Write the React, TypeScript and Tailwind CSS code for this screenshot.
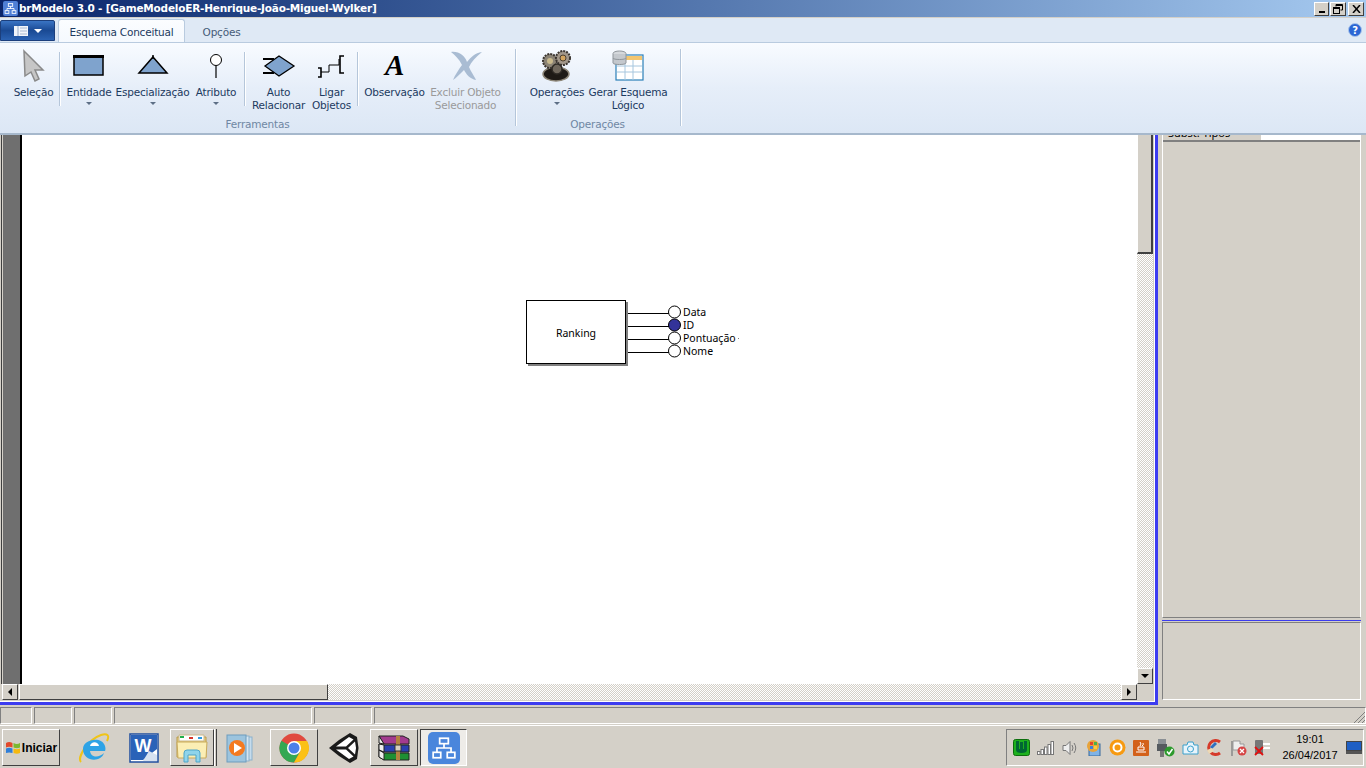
import React from "react";

const raised =
  "bg-[#d4d0c8] border border-t-white border-l-white border-r-[#404040] border-b-[#404040]";
const sunken =
  "border border-t-[#808080] border-l-[#808080] border-r-white border-b-white";
const checker =
  "bg-[repeating-conic-gradient(#d4d0c8_0_25%,#ffffff_0_50%)] bg-[length:2px_2px]";

function HierarchyGlyph({ size, stroke }: { size: number; stroke: string }) {
  return (
    <svg width={size} height={size} viewBox="0 0 24 24" fill="none" stroke={stroke} strokeWidth="1.6">
      <rect x="8" y="3" width="8" height="5" />
      <rect x="2" y="16" width="7" height="5" />
      <rect x="15" y="16" width="7" height="5" />
      <path d="M12 8v4M5.5 16v-4h13v4" />
    </svg>
  );
}

function CursorIcon() {
  return (
    <svg width="24" height="34" viewBox="0 0 24 34">
      <path d="M2 2 L21 21 L13 21 L17 30 L13 32 L9 23 L3 27 Z" fill="#c6c6c6" stroke="#8a8a8a" strokeWidth="1.5" />
    </svg>
  );
}

function EntityIcon() {
  return (
    <svg width="32" height="22" viewBox="0 0 32 22">
      <rect x="1" y="1" width="29" height="19" fill="#7fa3cd" stroke="#000" strokeWidth="1.5" />
      <rect x="0" y="0" width="31" height="3" fill="#000" />
    </svg>
  );
}

function SpecIcon() {
  return (
    <svg width="32" height="22" viewBox="0 0 32 22">
      <path d="M16 2 L30 18 H2 Z" fill="#7fa3cd" stroke="#000" strokeWidth="1.5" />
      <path d="M16 0v4" stroke="#000" strokeWidth="1.5" />
    </svg>
  );
}

function AttrIcon() {
  return (
    <svg width="16" height="26" viewBox="0 0 16 26">
      <circle cx="8" cy="7" r="5.5" fill="#fff" stroke="#000" />
      <path d="M8 13v12" stroke="#000" strokeWidth="1.2" />
    </svg>
  );
}

function AutoRelIcon() {
  return (
    <svg width="34" height="24" viewBox="0 0 34 24">
      <path d="M1 5H12M1 19H12" stroke="#000" strokeWidth="2" />
      <path d="M17 2 L32 12 L17 22 L3 12 Z" fill="#7fa3cd" stroke="#000" strokeWidth="1.3" />
    </svg>
  );
}

function LinkIcon() {
  return (
    <svg width="30" height="24" viewBox="0 0 30 24" fill="none" stroke="#000">
      <path d="M1 14H4V23H1" strokeWidth="1.6" />
      <path d="M4 18H12V11H22V5" strokeWidth="1" />
      <path d="M27 2H23V19H27" strokeWidth="1.6" />
    </svg>
  );
}

function NoteIcon() {
  return (
    <span className="-mt-[2px] font-['Liberation_Serif',serif] text-[29px] leading-[30px] font-bold italic text-black">
      A
    </span>
  );
}

function DeleteIcon() {
  return (
    <svg width="34" height="32" viewBox="0 0 34 32">
      <path d="M2 2 C10 1 16 6 18 12 C22 7 26 3 33 2 C27 7 22 12 20 17 C22 22 26 27 27 30 C21 29 17 24 15 20 C11 24 7 28 4 30 C6 25 10 19 13 15 C10 9 6 5 2 2 Z" fill="#a9bcd3" />
    </svg>
  );
}

function GearsIcon() {
  return (
    <svg width="32" height="32" viewBox="0 0 32 32">
      <ellipse cx="15" cy="24" rx="13" ry="7" fill="#1e1a16" stroke="#8d8678" strokeWidth="1.5" />
      <circle cx="9" cy="11" r="7" fill="#8b8375" stroke="#3b3530" strokeWidth="2" strokeDasharray="2 1" />
      <circle cx="9" cy="11" r="3" fill="#c9b98c" />
      <circle cx="22" cy="8" r="7" fill="#a2978a" stroke="#3b3530" strokeWidth="2" strokeDasharray="2 1" />
      <circle cx="22" cy="8" r="3" fill="#d3a45e" stroke="#4b3f30" />
      <circle cx="16" cy="19" r="5" fill="#6f675c" stroke="#2e2a25" strokeWidth="1.5" />
    </svg>
  );
}

function LogicalIcon() {
  return (
    <svg width="32" height="31" viewBox="0 0 32 31">
      <rect x="4" y="5" width="27" height="25" fill="#fff" stroke="#2a7fb8" strokeWidth="1.2" />
      <rect x="5" y="6" width="25" height="4" fill="#f3c56f" />
      <path d="M5 16H30M5 22H30M13 10V30M21 10V30" stroke="#a6c6de" />
      <ellipse cx="7.5" cy="3.5" rx="6.5" ry="2.5" fill="#d5d8dc" stroke="#8f959b" />
      <path d="M1 4V13C1 15 14 15 14 13V4" fill="#c4c8cd" stroke="#8f959b" />
      <path d="M1 8C1 10 14 10 14 8" fill="none" stroke="#8f959b" />
    </svg>
  );
}

function DownTick() {
  return <span className="mt-[3px] h-0 w-0 border-x-[3px] border-t-[3px] border-x-transparent border-t-[#5d6f86]" />;
}

type ToolProps = {
  width: string;
  icon: React.ReactNode;
  lines: string[];
  arrow?: boolean;
  disabled?: boolean;
};

function Tool({ width, icon, lines, arrow, disabled }: ToolProps) {
  return (
    <div className={`${width} flex shrink-0 flex-col items-center`}>
      <div className="mb-[4px] flex h-[33px] w-full items-center justify-center">{icon}</div>
      <div className={`text-center leading-[13px] whitespace-nowrap ${disabled ? "text-[#9a9a9a]" : "text-[#1c3a60]"}`}>
        {lines.map((l) => (
          <div key={l}>{l}</div>
        ))}
      </div>
      {arrow && <DownTick />}
    </div>
  );
}

function Sep({ group }: { group?: boolean }) {
  return (
    <div className={`${group ? "h-[77px]" : "mt-[3px] h-[54px]"} w-[2px] shrink-0 border-r border-white bg-[#b5c6da]`} />
  );
}

function Ribbon() {
  return (
    <div className="flex h-[93px] shrink-0 border-t border-b-2 border-t-[#b9cbdf] border-b-[#a6b8cc] bg-gradient-to-b from-[#f8fbff] via-[#e6eef9] via-50% to-[#dce7f5] pt-[6px] pl-[8px] font-['DejaVu_Sans',sans-serif] text-[10.5px] tracking-[-0.2px]">
      <div className="flex w-[507px] shrink-0 flex-col">
        <div className="flex h-[66px] items-start">
          <Tool width="w-[51px]" icon={<CursorIcon />} lines={["Seleção"]} />
          <Sep />
          <Tool width="w-[56px]" icon={<EntityIcon />} lines={["Entidade"]} arrow />
          <Tool width="w-[71px]" icon={<SpecIcon />} lines={["Especialização"]} arrow />
          <Tool width="w-[56px]" icon={<AttrIcon />} lines={["Atributo"]} arrow />
          <Sep />
          <Tool width="w-[65px]" icon={<AutoRelIcon />} lines={["Auto", "Relacionar"]} />
          <Tool width="w-[41px]" icon={<LinkIcon />} lines={["Ligar", "Objetos"]} />
          <div className="w-[5px] shrink-0" />
          <Sep />
          <Tool width="w-[71px]" icon={<NoteIcon />} lines={["Observação"]} />
          <Tool width="w-[71px]" icon={<DeleteIcon />} lines={["Excluir Objeto", "Selecionado"]} disabled />
        </div>
        <div className="mt-[3px] pr-[8px] text-center text-[#6f87a3]">Ferramentas</div>
      </div>
      <Sep group />
      <div className="flex w-[163px] shrink-0 flex-col">
        <div className="flex h-[66px] items-start pl-[8px]">
          <Tool width="w-[64px]" icon={<GearsIcon />} lines={["Operações"]} arrow />
          <Tool width="w-[78px]" icon={<LogicalIcon />} lines={["Gerar Esquema", "Lógico"]} />
        </div>
        <div className="mt-[3px] pr-[2px] text-center text-[#6f87a3]">Operações</div>
      </div>
      <Sep group />
    </div>
  );
}

function TitleBar() {
  return (
    <div className="flex h-[18px] shrink-0 items-center border-b border-b-[#d4d0c8] bg-gradient-to-r from-[#0a246a] to-[#a6caf0] pl-[3px] font-['DejaVu_Sans',sans-serif] text-[10.5px] font-bold tracking-[-0.2px] text-white">
      <div className="flex h-[15px] w-[15px] items-center justify-center rounded-[2px] bg-[#4f7fd6]">
        <HierarchyGlyph size={13} stroke="#ffffff" />
      </div>
      <span className="ml-[1px] flex-1 whitespace-nowrap">brModelo 3.0 - [GameModeloER-Henrique-João-Miguel-Wylker]</span>
      <div className="flex items-center text-black">
        <div className={`${raised} flex h-[14px] w-[15px] items-end justify-center pb-[2px]`}>
          <div className="h-[2px] w-[6px] bg-black" />
        </div>
        <div className={`${raised} ml-[1px] flex h-[14px] w-[16px] items-center justify-center`}>
          <svg width="10" height="10" viewBox="0 0 10 10" fill="none" stroke="#000">
            <path d="M3 2.5V.5H9.5V6H7.5" />
            <path d="M3 1.5H9.5" />
            <rect x=".5" y="3.5" width="6" height="6" />
            <path d="M.5 4.5H6.5" />
          </svg>
        </div>
        <div className={`${raised} mr-[2px] ml-[2px] flex h-[14px] w-[16px] items-center justify-center`}>
          <svg width="9" height="8" viewBox="0 0 9 8" stroke="#000" strokeWidth="1.5">
            <path d="M1 0L8 8M8 0L1 8" />
          </svg>
        </div>
      </div>
    </div>
  );
}

function TabRow() {
  return (
    <div className="flex h-[24px] shrink-0 items-end bg-[#dfe9f5] font-['DejaVu_Sans',sans-serif] text-[10.5px] tracking-[-0.2px]">
      <div className="mb-[1px] flex h-[21px] w-[55px] items-center justify-center gap-[6px] rounded-t-[2px] border border-[#1c3f7c] bg-gradient-to-b from-[#3a74c4] via-[#1a4a94] to-[#2b62b2]">
        <svg width="14" height="10" viewBox="0 0 14 10">
          <rect width="14" height="10" fill="#f2f5fa" />
          <path d="M4 0V10" stroke="#c3cfe0" strokeWidth="2" />
          <path d="M6 2H13M6 5H13M6 8H13" stroke="#a9bad2" />
        </svg>
        <span className="h-0 w-0 border-x-[4px] border-t-[4px] border-x-transparent border-t-white" />
      </div>
      <div className="ml-[3px] flex h-[23px] w-[127px] items-center justify-center rounded-t-[3px] border border-b-0 border-[#b9cbdf] bg-gradient-to-b from-[#fbfdff] to-[#f5f9fe] pt-[3px] text-[#1c3a60]">
        Esquema Conceitual
      </div>
      <div className="flex h-[22px] w-[73px] items-center justify-center pt-[3px] text-[#465b78]">Opções</div>
      <div className="flex-1" />
      <svg className="mr-[4px] mb-[5px]" width="14" height="14" viewBox="0 0 14 14">
        <circle cx="7" cy="7" r="6.5" fill="#2b66d4" stroke="#a9c4ea" />
        <text x="7" y="11" textAnchor="middle" fontSize="10" fontWeight="bold" fill="#fff" fontFamily="DejaVu Sans">
          ?
        </text>
      </svg>
    </div>
  );
}

function ScrollBtn({ dir }: { dir: "left" | "right" | "down" }) {
  const arrow = {
    left: "border-y-[4px] border-r-[4px] border-y-transparent border-r-black",
    right: "border-y-[4px] border-l-[4px] border-y-transparent border-l-black",
    down: "border-x-[4px] border-t-[4px] border-x-transparent border-t-black",
  }[dir];
  return (
    <div className={`${raised} flex h-[16px] w-[16px] shrink-0 items-center justify-center`}>
      <span className={`h-0 w-0 ${arrow}`} />
    </div>
  );
}

function Diagram() {
  const attrs = [
    { name: "Data", y: 312, key: false },
    { name: "ID", y: 325, key: true },
    { name: "Pontuação", y: 338, key: false },
    { name: "Nome", y: 351, key: false },
  ];
  return (
    <div className="relative flex-1 bg-white font-['Noto_Sans',sans-serif] text-[10.5px] text-black">
      {/* coordinates below are relative to the canvas at x=22, y=135 */}
      <div className="absolute top-[165px] left-[504px] flex h-[64px] w-[100px] items-center justify-center border border-black bg-white pt-[3px] shadow-[2px_2px_0_#808080]">
        Ranking
      </div>
      <svg className="absolute top-[169px] left-[604px]" width="60" height="60" viewBox="0 0 60 60" fill="none" stroke="#000">
        {attrs.map((a) => (
          <g key={a.name}>
            <path d={`M2 ${a.y - 304 + 1.5}H43`} />
            <circle cx="48.5" cy={a.y - 304} r="6" fill={a.key ? "#333399" : "#fff"} />
          </g>
        ))}
      </svg>
      {attrs.map((a) => (
        <span key={a.name} className="absolute left-[661px] leading-[13px]" style={{ top: a.y - 135 - 6 }}>
          {a.name}
        </span>
      ))}
      <div className="absolute top-[203px] left-[716px] h-px w-px bg-[#808080]" />
    </div>
  );
}

function Workspace() {
  return (
    <div className="h-[570px] w-[1158px] shrink-0 border-r-[3px] border-b-[3px] border-r-[#3c3cf0] border-b-[#3c3cf0]">
      <div className="flex h-full flex-col border-r border-b border-r-white border-b-white pr-[1px]">
        <div className="flex h-[549px] shrink-0">
          <div className="w-[22px] shrink-0 border-r-[2px] border-r-black bg-[linear-gradient(to_right,#d4d0c8_1px,#404040_1px,#404040_2px,#d4d0c8_2px,#d4d0c8_3px,#6f6f6f_3px)]" />
          <Diagram />
          <div className={`${checker} flex w-[16px] shrink-0 flex-col`}>
            <div className="h-[119px] shrink-0 border-r-2 border-b-2 border-l border-r-[#404040] border-b-[#404040] border-l-white bg-[#d4d0c8]" />
            <div className="flex-1" />
            <ScrollBtn dir="down" />
          </div>
        </div>
        <div className="flex h-[16px] shrink-0 pl-[2px]">
          <ScrollBtn dir="left" />
          <div className={`${raised} ml-[1px] h-[16px] w-[309px] shrink-0`} />
          <div className={`${checker} flex-1`} />
          <ScrollBtn dir="right" />
          <div className="w-[16px] shrink-0" />
        </div>
      </div>
    </div>
  );
}

function SidePanel() {
  return (
    <div className="flex flex-1 flex-col pr-[5px] pl-[4px]">
      <div className="flex h-[483px] shrink-0 flex-col border border-t-0 border-r-white border-b-[#808080] border-l-white">
        <div className="flex h-[7px] shrink-0 overflow-hidden border-b-2 border-[#808080]">
          <div className="w-[98px] shrink-0 pl-[5px] font-['Noto_Sans',sans-serif] text-[11px] leading-[0px] text-black">
            <div className="-mt-[2px]">Subst. Tipos</div>
          </div>
          <div className="flex-1 bg-white" />
        </div>
      </div>
      <div className="mt-[2px] h-[1px] shrink-0 bg-[#3c3cf0]" />
      <div className={`${sunken} mt-[1px] h-[78px] shrink-0`} />
    </div>
  );
}

function StatusBar() {
  const cells = ["w-[32px]", "w-[38px]", "w-[38px]", "w-[198px]", "w-[58px]"];
  return (
    <div className="relative flex h-[21px] shrink-0 gap-[2px] border-b border-b-white pt-[2px] pb-[1px]">
      {cells.map((w, i) => (
        <div key={i} className={`${w} h-[17px] shrink-0 ${sunken}`} />
      ))}
      <div className={`h-[17px] flex-1 ${sunken}`} />
      <svg className="absolute right-0 bottom-[1px]" width="14" height="14" viewBox="0 0 14 14" stroke="#808080">
        <path d="M13 2L2 13M13 6L6 13M13 10L10 13" />
      </svg>
    </div>
  );
}

function IE() {
  return (
    <svg width="32" height="32" viewBox="0 0 32 32" fill="none">
      <path d="M3 30C-1 26 9 8 23 3C29 1 32 3 29 9" stroke="#f0c419" strokeWidth="2" />
      <path d="M5 17C5 7 24 4 27 14C28 17 27 19 27 19H12C13 26 21 26 26 21C23 31 5 30 5 17Z" fill="#2ea3e6" />
      <path d="M12 14H21C20 9 13 9 12 14Z" fill="#fff" />
    </svg>
  );
}

function WordIcon() {
  return (
    <svg width="30" height="30" viewBox="0 0 30 30">
      <rect x="1" y="1" width="28" height="28" fill="#fff" stroke="#1f4e9e" strokeWidth="1.5" />
      <path d="M2 2H28V16L14 27H2Z" fill="#2a62b8" />
      <path d="M20 18L28 22V28H14Z" fill="#d7e2f1" />
      <text x="14" y="19" textAnchor="middle" fontSize="18" fontWeight="bold" fill="#fff" fontFamily="Liberation Sans">
        W
      </text>
    </svg>
  );
}

function Folder() {
  return (
    <svg width="32" height="30" viewBox="0 0 32 30">
      <path d="M1 4H30V24H1Z" fill="#e8cf80" stroke="#b89a4c" />
      <path d="M3 2H28V8H3Z" fill="#fff" stroke="#c9b98c" />
      <path d="M4 3h4v2H4z" fill="#22b14c" />
      <path d="M13 4h4v2h-4z" fill="#d8362b" />
      <path d="M22 4h4v2h-4z" fill="#2a9ae0" />
      <path d="M1 9H31L30 25H2Z" fill="#fbeeb4" stroke="#c9ab5c" />
      <path d="M8 29V20Q8 17 11 17H21Q24 17 24 20V29H20V22H12V29Z" fill="#8fd4ea" stroke="#4fa5c8" />
    </svg>
  );
}

function Media() {
  return (
    <svg width="30" height="30" viewBox="0 0 30 30">
      <rect x="10" y="4" width="16" height="23" fill="#c6dcec" stroke="#8bb1cc" />
      <rect x="6" y="3" width="17" height="25" fill="#d6e6f1" stroke="#8bb1cc" />
      <rect x="1" y="2" width="19" height="27" fill="#9cc4de" stroke="#6d9cbd" />
      <circle cx="11" cy="15" r="8" fill="#f47a20" />
      <path d="M8 10L16 15L8 20Z" fill="#fff" />
    </svg>
  );
}

function Chrome() {
  return (
    <svg width="30" height="30" viewBox="0 0 30 30">
      <circle cx="15" cy="15" r="14.5" fill="#e04a3f" />
      <path d="M15 15L2.4 7.7A14.5 14.5 0 0 0 15 29.5L22 17Z" fill="#34a853" />
      <path d="M15 8H28.1A14.5 14.5 0 0 1 15 29.5L21.5 18Z" fill="#fbc116" />
      <circle cx="15" cy="15" r="7" fill="#fff" />
      <circle cx="15" cy="15" r="5.5" fill="#4a80e8" />
    </svg>
  );
}

function Unity() {
  return (
    <svg width="30" height="32" viewBox="0 0 30 32">
      <path d="M0 16L10 8L21 1L28 5L29.500 16L28 27L21 31L10 24Z" fill="#1a1a1a" />
      <path d="M7 14.500L20 5L24.500 7.500L17 14.500Z" fill="#fff" />
      <path d="M7 17.500H17L24.500 24.500L20 27Z" fill="#fff" />
      <path d="M19 16L26 9.500L27 16L26 22.500Z" fill="#fff" />
    </svg>
  );
}

function Rar() {
  return (
    <svg width="32" height="26" viewBox="0 0 32 26">
      <path d="M1 1H25L31 4V9H6Z" fill="#a33b8f" stroke="#222" />
      <path d="M1 1L6 9L1 8Z" fill="#eee" stroke="#222" />
      <path d="M1 9L6 10H31V17H6L1 15Z" fill="#2a3fb0" stroke="#222" />
      <path d="M1 15L6 18H31V25H6L1 22Z" fill="#1e8f33" stroke="#222" />
      <path d="M1 9L6 10V17L1 15ZM1 15L6 18V25L1 22Z" fill="#eee" stroke="#222" />
      <rect x="18" y="1" width="4" height="24" fill="#b3813f" />
      <rect x="17" y="10" width="6" height="6" fill="#d8d0c0" stroke="#333" />
    </svg>
  );
}

function BrModeloApp() {
  return (
    <div className="flex h-[32px] w-[32px] items-center justify-center rounded-[5px] bg-[#4a86dc]">
      <HierarchyGlyph size={26} stroke="#ffffff" />
    </div>
  );
}

function TaskSlot({ children, btn, pressed, width }: { children: React.ReactNode; btn?: boolean; pressed?: boolean; width: string }) {
  const frame = pressed
    ? "border border-t-[#404040] border-l-[#404040] border-r-white border-b-white bg-[#eeece8]"
    : btn
      ? raised
      : "";
  return <div className={`${width} ${frame} flex h-[37px] shrink-0 items-center justify-center`}>{children}</div>;
}

function Tray() {
  return (
    <div className={`${sunken} ml-auto flex h-[37px] w-[358px] shrink-0 items-center pl-[6px] font-['Liberation_Sans',sans-serif] text-[11px] text-black`}>
      <div className="flex w-[262px] shrink-0 items-center justify-between pr-[4px]">
        <svg width="17" height="17" viewBox="0 0 17 17">
          <rect x=".5" y=".5" width="16" height="16" rx="2" fill="#1db11d" stroke="#0d6d0d" />
          <path d="M3 2V11Q3 14 8.500 14Q14 14 14 11V2H11V10H10V3H7V10H6V2Z" fill="#063" />
        </svg>
        <svg width="17" height="14" viewBox="0 0 17 14" fill="#fff" stroke="#777">
          <rect x=".5" y="10.500" width="2.500" height="3" />
          <rect x="4" y="8.500" width="2.500" height="5" />
          <rect x="7.500" y="6" width="2.500" height="7.500" />
          <rect x="11" y="3.500" width="2.500" height="10" />
          <rect x="14" y=".5" width="2.500" height="13" />
        </svg>
        <svg width="16" height="16" viewBox="0 0 16 16" fill="none" stroke="#777">
          <path d="M1 5.500H4L8 1.500V14.500L4 10.500H1Z" fill="#eee" />
          <path d="M10 5Q12 8 10 11M12 3Q15.500 8 12 13" />
        </svg>
        <svg width="17" height="17" viewBox="0 0 17 17">
          <rect x="4" y="5" width="11" height="12" fill="#7fb3e6" stroke="#36689c" />
          <circle cx="8" cy="7" r="6" fill="#e8a33a" />
          <rect x="5" y="3" width="3" height="3" fill="#e5432d" />
          <rect x="9" y="3" width="3" height="3" fill="#4bb04a" />
          <rect x="5" y="7" width="3" height="3" fill="#3f7fdc" />
          <rect x="9" y="7" width="3" height="3" fill="#f4d03f" />
        </svg>
        <svg width="17" height="17" viewBox="0 0 17 17" fill="none">
          <circle cx="8.500" cy="8.500" r="8" fill="#f79a11" />
          <circle cx="8.500" cy="8.500" r="4" stroke="#fff" strokeWidth="2" />
        </svg>
        <svg width="16" height="16" viewBox="0 0 16 16">
          <rect width="16" height="16" rx="1" fill="#d3611a" />
          <path d="M3 12H13M5 10H11V7H5ZM7 2Q9 4 7 6M10 3Q11 5 9 6" fill="none" stroke="#fff" />
        </svg>
        <svg width="18" height="18" viewBox="0 0 18 18">
          <rect x="1" y="0" width="8" height="5" fill="#8a8f94" />
          <rect x="0" y="5" width="10" height="7" fill="#555a5f" />
          <rect x="3" y="12" width="4" height="6" fill="#777" />
          <circle cx="12.500" cy="12.500" r="5" fill="#2d9a2d" />
          <path d="M10 12.500L12 15L15.500 10" stroke="#fff" strokeWidth="1.500" fill="none" />
        </svg>
        <svg width="17" height="14" viewBox="0 0 17 14" fill="#e7f4fb" stroke="#3aa0cc">
          <path d="M1 4H5L6 1H11L12 4H16V13H1Z" />
          <circle cx="8.500" cy="8" r="3" />
        </svg>
        <svg width="17" height="17" viewBox="0 0 17 17">
          <path d="M14 3A7 7 0 1 0 14 14" fill="none" stroke="#d63a2a" strokeWidth="3" />
          <path d="M9 3L11 5L6 10L4 8Z" fill="#2f6fc0" />
          <path d="M1 11L6 9L8 12L3 15Z" fill="#ecd9b5" />
        </svg>
        <svg width="16" height="16" viewBox="0 0 16 16">
          <path d="M1 1V16" stroke="#888" strokeWidth="1.500" />
          <path d="M2 1H9V4H13V10H2Z" fill="#eee" stroke="#999" />
          <circle cx="11" cy="11" r="4.500" fill="#d64545" />
          <path d="M9 9L13 13M13 9L9 13" stroke="#fff" strokeWidth="1.300" />
        </svg>
        <svg width="17" height="17" viewBox="0 0 17 17">
          <rect x="1" y="1" width="8" height="14" rx="1" fill="#777" />
          <path d="M9 5H16M9 9H16" stroke="#fff" strokeWidth="2" />
          <path d="M1 8L9 16M9 8L1 16" stroke="#e01010" strokeWidth="1.800" />
        </svg>
      </div>
      <div className="ml-[3px] -mt-[1px] flex w-[64px] shrink-0 flex-col items-center leading-[16px]">
        <span>19:01</span>
        <span>26/04/2017</span>
      </div>
      <svg className="ml-[4px]" width="16" height="13" viewBox="0 0 16 13">
        <rect x=".5" y=".5" width="15" height="9" fill="#1f5fc4" stroke="#444" />
        <rect y="10" width="16" height="3" fill="#555" />
      </svg>
    </div>
  );
}

function Taskbar() {
  return (
    <div className="flex h-[43px] shrink-0 items-center pr-[2px] pl-[2px]">
      <div className={`${raised} flex h-[37px] w-[58px] shrink-0 items-center justify-center gap-[1px] font-['Liberation_Sans',sans-serif] text-[12px] font-bold text-black`}>
        <svg width="16" height="14" viewBox="0 0 16 14">
          <path d="M1 2Q4 0 7.500 2V6.500Q4 5 1 6.500Z" fill="#e2492b" />
          <path d="M8.500 2Q12 4 15 2V6.500Q12 8 8.500 6.500Z" fill="#7cb82f" />
          <path d="M1 7.500Q4 6 7.500 7.500V12Q4 11 1 12Z" fill="#2f7ed8" />
          <path d="M8.500 7.500Q12 9 15 7.500V12Q12 13.500 8.500 12Z" fill="#f5b90f" />
        </svg>
        Iniciar
      </div>
      <div className="w-[10px] shrink-0" />
      <TaskSlot width="w-[48px]"><IE /></TaskSlot>
      <TaskSlot width="w-[52px]"><WordIcon /></TaskSlot>
      <TaskSlot width="w-[44px]" btn><Folder /></TaskSlot>
      <div className="h-[37px] w-[3px] shrink-0 border-r border-l border-r-[#404040] border-l-white" />
      <TaskSlot width="w-[53px]"><span className="pr-[6px]"><Media /></span></TaskSlot>
      <TaskSlot width="w-[48px]" btn><Chrome /></TaskSlot>
      <TaskSlot width="w-[52px]"><Unity /></TaskSlot>
      <TaskSlot width="w-[48px]" btn><Rar /></TaskSlot>
      <div className="w-[2px] shrink-0" />
      <TaskSlot width="w-[47px]" pressed><BrModeloApp /></TaskSlot>
      <Tray />
    </div>
  );
}

export default function App() {
  return (
    <div className="flex h-[768px] w-[1366px] flex-col overflow-hidden bg-[#d4d0c8]">
      <TitleBar />
      <TabRow />
      <Ribbon />
      <div className="flex h-[570px] shrink-0">
        <Workspace />
        <SidePanel />
      </div>
      <StatusBar />
      <Taskbar />
    </div>
  );
}
